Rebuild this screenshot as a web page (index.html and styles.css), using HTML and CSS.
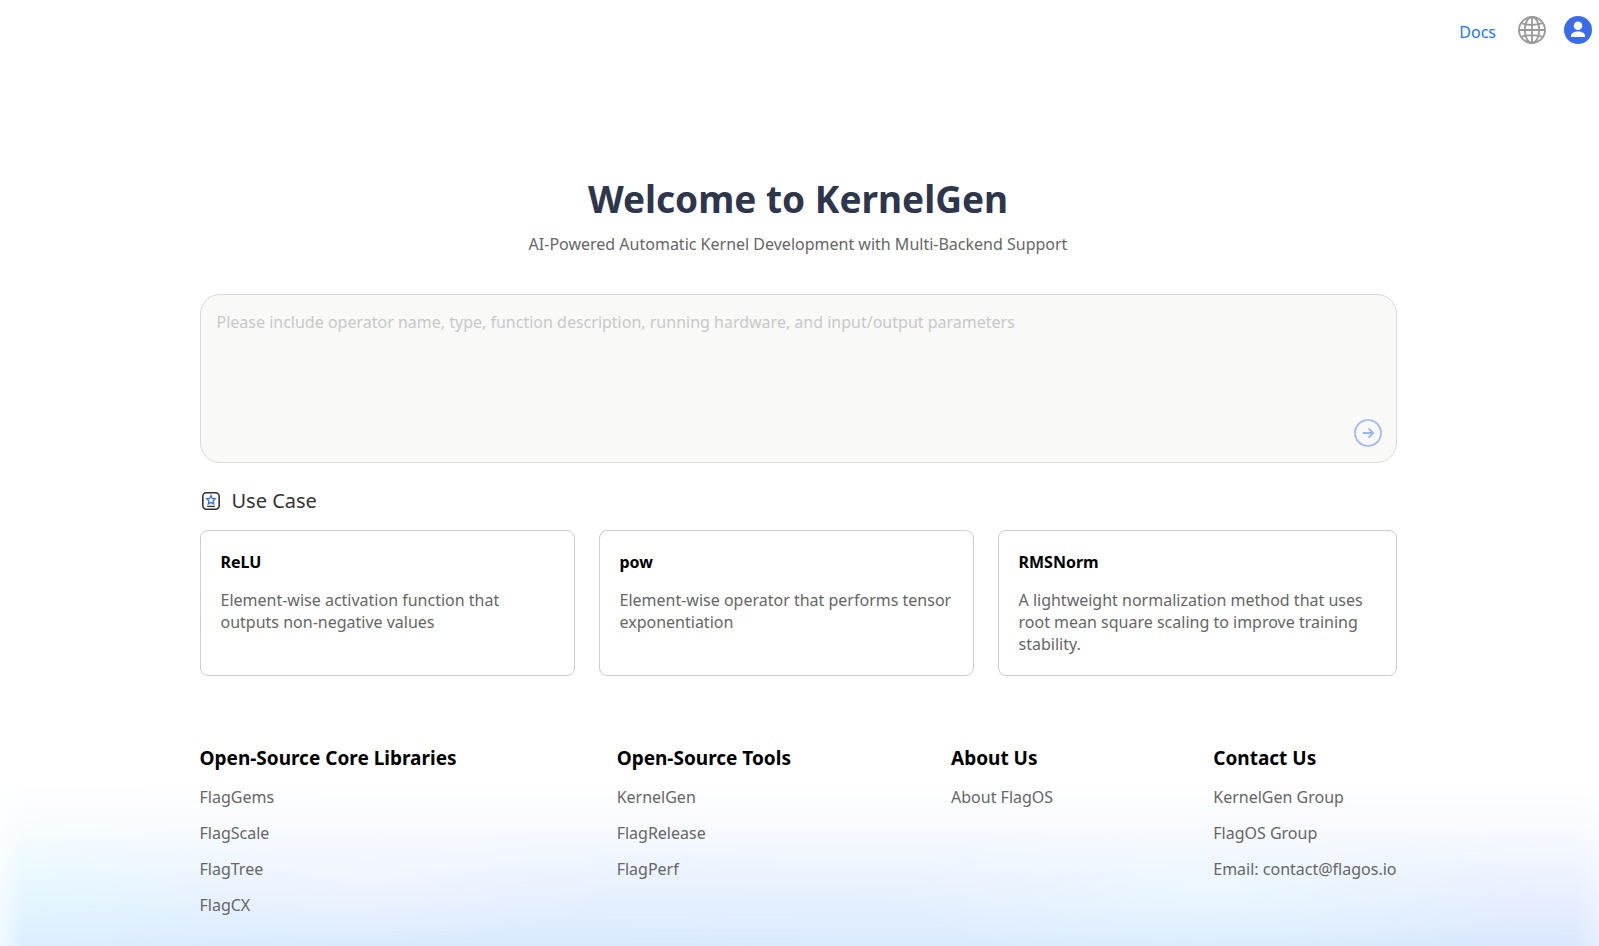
FILE: index.html
```
<!DOCTYPE html>
<html lang="en">
<head>
<meta charset="UTF-8" />
<meta name="viewport" content="width=device-width, initial-scale=1.0"/>
<title>KernelGen</title>
<link rel="stylesheet" href="styles.css">
</head>
<body>

<div class="page">
  <header class="topbar">
    <a class="docs-link" href="#">Docs</a>
    <button class="icon-button" type="button" aria-label="Language">
      <svg width="28" height="28" viewBox="0 0 28 28" fill="none" stroke="#999" stroke-width="1.8">
        <circle cx="14" cy="14" r="13"/>
        <ellipse cx="14" cy="14" rx="7.2" ry="13"/>
        <path d="M14 1v26M1 14h26M3.2 7.2c6.4 2 15.2 2 21.6 0M3.2 20.8c6.4-2 15.2-2 21.6 0"/>
      </svg>
    </button>
    <button class="icon-button" type="button" aria-label="Account">
      <svg width="28" height="28" viewBox="0 0 28 28">
        <circle cx="14" cy="14" r="14" fill="#3a6cea"/>
        <circle cx="14" cy="9.8" r="4.3" fill="#fff"/>
        <path d="M7 20.2c0-3.2 2.9-4.7 7-4.7s7 1.5 7 4.7c0 .6-.4.9-1 .9H8c-.6 0-1-.3-1-.9z" fill="#fff"/>
      </svg>
    </button>
  </header>

  <main class="content">
    <h1 class="title">Welcome to KernelGen</h1>
    <p class="subtitle">AI-Powered Automatic Kernel Development with Multi-Backend Support</p>

    <form class="prompt">
      <textarea class="prompt-input" aria-label="Operator description" placeholder="Please include operator name, type, function description, running hardware, and input/output parameters"></textarea>
      <button class="send-button" type="button" aria-label="Send">
        <svg width="28" height="28" viewBox="0 0 28 28" fill="none" stroke="#9bb4f6" stroke-width="1.7">
          <circle cx="14" cy="14" r="13"/>
          <path d="M8.8 14h10M14.6 9.4l4.5 4.6-4.5 4.6" stroke-width="1.8"/>
        </svg>
      </button>
    </form>

    <section>
      <h2 class="section-title">
        <svg width="22" height="22" viewBox="0 0 22 22" fill="none">
          <rect x="2.8" y="2.8" width="16.4" height="16.4" rx="3.6" stroke="#333" stroke-width="1.6"/>
          <path d="M11 5.6l1.3 2.8 3 .4-2.2 2.1.6 3-2.7-1.5-2.7 1.5.6-3-2.2-2.1 3-.4z" stroke="#3a6cea" stroke-width="1.3"/>
          <path d="M7.2 16.4h7.6" stroke="#333" stroke-width="1.3"/>
        </svg>
        Use Case
      </h2>
      <div class="cards">
        <div class="card">
          <h3>ReLU</h3>
          <p>Element-wise activation function that outputs non-negative values</p>
        </div>
        <div class="card">
          <h3>pow</h3>
          <p>Element-wise operator that performs tensor exponentiation</p>
        </div>
        <div class="card">
          <h3>RMSNorm</h3>
          <p>A lightweight normalization method that uses root mean square scaling to improve training stability.</p>
        </div>
      </div>
    </section>
  </main>

  <footer class="footer">
    <div class="footer-column">
      <h4>Open-Source Core Libraries</h4>
      <a href="#">FlagGems</a>
      <a href="#">FlagScale</a>
      <a href="#">FlagTree</a>
      <a href="#">FlagCX</a>
    </div>
    <div class="footer-column">
      <h4>Open-Source Tools</h4>
      <a href="#">KernelGen</a>
      <a href="#">FlagRelease</a>
      <a href="#">FlagPerf</a>
    </div>
    <div class="footer-column">
      <h4>About Us</h4>
      <a href="#">About FlagOS</a>
    </div>
    <div class="footer-column">
      <h4>Contact Us</h4>
      <a href="#">KernelGen Group</a>
      <a href="#">FlagOS Group</a>
      <a href="#">Email: contact@flagos.io</a>
    </div>
  </footer>
</div>

</body>
</html>
```
FILE: styles.css
```
* {
  box-sizing: border-box;
}
body {
  margin: 0;
  font-family: "Noto Sans", "Open Sans", sans-serif;
  font-size: 16px;
  line-height: 22px;
  color: #666;
  background-color: #fff;
}
h1, h2, h3, h4, p {
  margin: 0;
}
a {
  color: inherit;
  text-decoration: none;
}
button {
  padding: 0;
  border: none;
  background: none;
  cursor: pointer;
}
svg {
  display: block;
}
.page {
  position: relative;
  min-height: 100vh;
  padding-right: 3px;
  overflow: hidden;
  isolation: isolate;
}

/* Soft glow along the bottom edge */
.page::before {
  content: "";
  position: absolute;
  z-index: -1;
  left: 0;
  right: 0;
  bottom: 0;
  height: 166px;
  background:
    radial-gradient(ellipse 12% 60% at 2% 50%, rgba(216, 244, 255, 0.8), transparent),
    radial-gradient(ellipse 16% 40% at 23% 58%, rgba(240, 240, 255, 0.5), transparent),
    radial-gradient(ellipse 20% 50% at 76% 66%, rgba(228, 246, 255, 0.7), transparent),
    radial-gradient(ellipse 12% 70% at 98% 55%, rgba(226, 232, 255, 0.6), transparent),
    linear-gradient(to right, #dbedff, #dae9fe 32%, #dbeafe 60%, #d8e7fd);
  -webkit-mask-image: linear-gradient(to bottom, transparent, rgba(0, 0, 0, 0.18) 25%, rgba(0, 0, 0, 0.58) 60%, #000), linear-gradient(to right, rgba(0, 0, 0, 0.4), #000 24px, #000 calc(100% - 24px), rgba(0, 0, 0, 0.7));
  -webkit-mask-composite: source-in;
  mask-composite: intersect;
}

.topbar {
  display: flex;
  justify-content: flex-end;
  align-items: center;
  gap: 18px;
  height: 60px;
  padding-right: 4px;
}
.docs-link {
  padding: 4px 4px 0 0;
  color: #1677ff;
}

.content, .footer {
  width: 75%;
  margin: 0 auto;
}
.title {
  margin-top: 111px;
  font-size: 37px;
  line-height: 56px;
  text-align: center;
  color: #2d364d;
}
.subtitle {
  margin-top: 6px;
  text-align: center;
}

.prompt {
  position: relative;
  margin-top: 39px;
}
.prompt-input {
  display: block;
  width: 100%;
  height: 169px;
  padding: 16px;
  border: 1px solid #d9d9d9;
  border-radius: 20px;
  background-color: #f9f9f8;
  font: inherit;
  color: #333;
  resize: none;
  outline: none;
}
.prompt-input::placeholder {
  color: #c8c8c8;
}
.send-button {
  position: absolute;
  right: 15px;
  bottom: 16px;
}

.section-title {
  display: flex;
  align-items: center;
  gap: 10px;
  margin-top: 23px;
  font-size: 20px;
  font-weight: 400;
  line-height: 30px;
  color: #333;
}
.cards {
  display: flex;
  gap: 24px;
  margin-top: 14px;
}
.card {
  flex: 1 1 375px;
  min-height: 146px;
  padding: 20px;
  border: 1px solid #ccc;
  border-radius: 8px;
  background-color: #fff;
}
.card:last-child {
  flex-basis: 399px;
}
.card h3 {
  margin-bottom: 16px;
  font-size: 16px;
  color: #000;
}

.footer {
  display: flex;
  justify-content: space-between;
  padding: 68px 0 30px;
}
.footer-column {
  display: flex;
  flex-direction: column;
  gap: 14px;
}
.footer-column h4 {
  font-size: 19px;
  line-height: 28px;
  color: #000;
}
```
